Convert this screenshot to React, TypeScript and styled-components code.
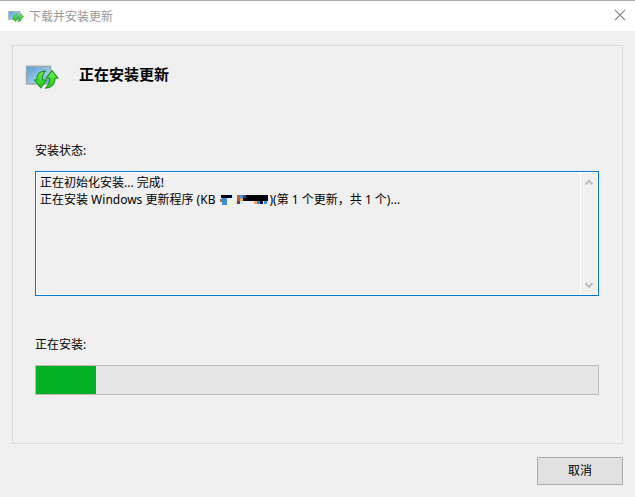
import React from 'react';
import styled, { createGlobalStyle } from 'styled-components';

const GlobalStyle = createGlobalStyle`
  *, *::before, *::after {
    box-sizing: border-box;
  }

  body {
    margin: 0;
    background: #f0f0f0;
    color: #000;
    font-family: "Noto Sans", "Noto Sans CJK SC", sans-serif;
    font-size: 12px;
    line-height: 17px;
  }
`;

const Dialog = styled.main`
  display: flex;
  flex-direction: column;
  min-height: 100vh;
  border-top: 1px solid #aaa;
`;

const TitleBar = styled.header`
  display: flex;
  align-items: center;
  height: 30px;
  padding: 0 8px;
  gap: 5px;
  background: #fff;
`;

const Title = styled.h1`
  flex: 1;
  margin: 0;
  color: #999;
  font-size: 12px;
  font-weight: 400;
`;

const CloseButton = styled.button`
  display: flex;
  padding: 0 1px 2px;
  border: 0;
  background: transparent;
  color: #8c8c8c;
`;

const Content = styled.section`
  display: flex;
  flex: 1;
  flex-direction: column;
  margin: 14px 12px 0;
  padding: 16px 23px 48px 22px;
  border: 1px solid #dcdcdc;
`;

const Heading = styled.div`
  display: flex;
  align-items: flex-end;
  gap: 20px;
  height: 28px;
  margin-left: -10px;
  margin-bottom: 52px;
`;

const HeadingText = styled.h2`
  align-self: flex-start;
  margin: 0;
  font-size: 15px;
  font-weight: 700;
  line-height: 24px;
`;

const Caption = styled.label`
  display: block;
  margin-bottom: 12px;
`;

const LogFrame = styled.div`
  display: flex;
  flex: 1;
  min-height: 125px;
  margin-bottom: 40px;
  padding: 1px;
  border: 1px solid #0078d7;
  background: #fff;
`;

const LogText = styled.div`
  flex: 1;
  padding: 1px 3px;
  background: #f0f0f0;
`;

const LogLine = styled.p`
  margin: 0;
  white-space: nowrap;
`;

const Scrollbar = styled.div`
  display: flex;
  flex-direction: column;
  justify-content: space-between;
  width: 16px;
  margin-left: 1px;
  background: #f0f0f0;
`;

const ScrollButton = styled.button`
  display: flex;
  align-items: center;
  justify-content: center;
  height: 18px;
  padding: 0;
  border: 0;
  background: transparent;
`;

const Progress = styled.progress`
  display: block;
  width: 100%;
  height: 30px;
  border: 1px solid #bcbcbc;
  background: #e6e6e6;
  appearance: none;

  &::-webkit-progress-bar {
    background: #e6e6e6;
  }

  &::-webkit-progress-value {
    background: #06b025;
  }
`;

const Footer = styled.footer`
  display: flex;
  justify-content: flex-end;
  padding: 13px 12px 12px;
`;

const ActionButton = styled.button`
  width: 86px;
  height: 28px;
  padding: 0 0 2px;
  border: 1px solid #adadad;
  background: #e1e1e1;
  color: #000;
  font: inherit;
`;

const Redaction = styled.svg`
  margin: 0 0 0 5px;
  vertical-align: -1px;
`;

function UpdateIcon({ width, height, id }: { width: number; height: number; id: string }) {
  return (
    <svg width={width} height={height} viewBox="0 0 32 24" aria-hidden="true">
      <defs>
        <linearGradient id={`${id}-screen`} x1="0" y1="0" x2="1" y2="1">
          <stop offset="0" stopColor="#4f9bd6" />
          <stop offset="0.6" stopColor="#9acbed" />
          <stop offset="1" stopColor="#5d9ed2" />
        </linearGradient>
        <linearGradient id={`${id}-arrow`} x1="0" y1="0" x2="0" y2="1">
          <stop offset="0" stopColor="#7cec58" />
          <stop offset="0.5" stopColor="#42dc34" />
          <stop offset="1" stopColor="#22c522" />
        </linearGradient>
      </defs>
      <rect x="1.5" y="2" width="22.5" height="16.5" fill={`url(#${id}-screen)`} stroke="#a2a8ab" strokeWidth="1.5" />
      <path
        d="M19.5 6.2c-5.6.2-8.5 3.4-8.5 8.6H8.8l6.1 7.4 5.3-7.4h-3.6c-.6-3.4.3-6.2 2.9-8.6Z"
        fill={`url(#${id}-arrow)`}
        stroke="#21951e"
        strokeWidth="1"
        strokeLinejoin="round"
      />
      <path
        d="M25.5 6 19.9 13.1h3.2c.4 3.8-.9 6.5-3.9 9.5 6-.4 9.3-4.1 9.1-9.5h2.8Z"
        fill={`url(#${id}-arrow)`}
        stroke="#21951e"
        strokeWidth="1"
        strokeLinejoin="round"
      />
    </svg>
  );
}

function Chevron({ down = false }: { down?: boolean }) {
  return (
    <svg width="8" height="7" viewBox="0 0 8 7" aria-hidden="true">
      <path d={down ? 'M.5 1.3 4 4.7l3.5-3.4' : 'M.5 5.3 4 1.9l3.5 3.4'} fill="none" stroke="#bfbfbf" strokeWidth="2.2" />
    </svg>
  );
}

function RedactedNumber() {
  return (
    <Redaction width="49" height="10" viewBox="0 0 49 10" shapeRendering="crispEdges" aria-hidden="true">
      <path d="M1 0h12v3H1zM23 3h25v3H23zM26 0h19v3H26z" fill="#000" />
      <path d="M8 0h3v3H8zM45 0h3v3h-3zM40 6h3v3h-3z" fill="#000050" />
      <path d="M2 3h5v7H2zM20 0h3v3h-3zM37 6h3v3h-3zM44 6h3v3h-3z" fill="#3b8ed0" />
      <path d="M0 4h2v3H0zM17 0h3v6h-3z" fill="#b7652f" />
      <path d="M20 3h3v3h-3zM34 6h3v3h-3z" fill="#efa75a" />
      <path d="M23 0h3v3h-3zM17 6h3v3h-3z" fill="#60358a" />
      <path d="M12 0h2v3h-2zM20 6h3v3h-3z" fill="#c9efef" />
      <path d="M14 6h3v3h-3z" fill="#f2e9a7" />
    </Redaction>
  );
}

export default function App() {
  return (
    <>
      <GlobalStyle />
      <Dialog>
        <TitleBar>
          <UpdateIcon width={16} height={13} id="title" />
          <Title>下载并安装更新</Title>
          <CloseButton type="button" aria-label="关闭">
            <svg width="12" height="12" viewBox="0 0 12 12" aria-hidden="true">
              <path d="m1 1 10 10M11 1 1 11" fill="none" stroke="currentColor" strokeWidth="1.1" />
            </svg>
          </CloseButton>
        </TitleBar>
        <Content>
          <Heading>
            <UpdateIcon width={34} height={26} id="heading" />
            <HeadingText>正在安装更新</HeadingText>
          </Heading>
          <Caption as="span" id="status-label">安装状态:</Caption>
          <LogFrame>
            <LogText role="log" aria-labelledby="status-label" tabIndex={0}>
              <LogLine>正在初始化安装... 完成!</LogLine>
              <LogLine>
                正在安装 Windows 更新程序 (KB
                <RedactedNumber />
                )(第 1 个更新，共 1 个)...
              </LogLine>
            </LogText>
            <Scrollbar>
              <ScrollButton type="button" aria-label="向上滚动" disabled>
                <Chevron />
              </ScrollButton>
              <ScrollButton type="button" aria-label="向下滚动" disabled>
                <Chevron down />
              </ScrollButton>
            </Scrollbar>
          </LogFrame>
          <Caption htmlFor="install-progress">正在安装:</Caption>
          <Progress id="install-progress" value={60} max={562} />
        </Content>
        <Footer>
          <ActionButton type="button">取消</ActionButton>
        </Footer>
      </Dialog>
    </>
  );
}
